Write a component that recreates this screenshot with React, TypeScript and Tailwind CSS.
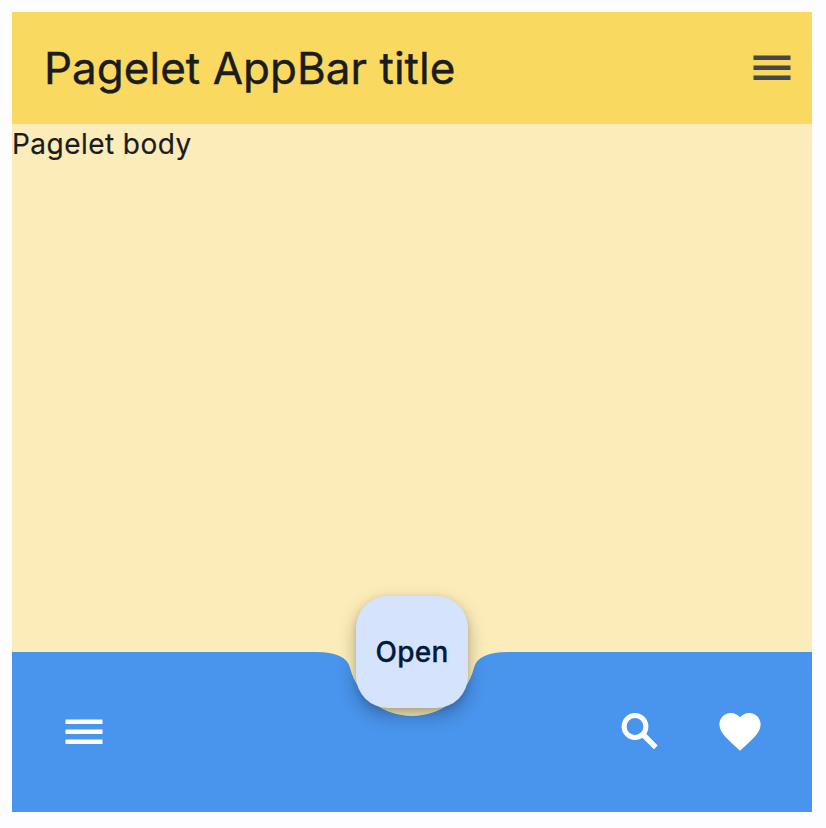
import type { ReactNode } from "react";

function MenuIcon({ className }: { className: string }) {
  return (
    <svg className={`h-12 w-12 ${className}`} viewBox="0 0 48 48" fill="currentColor">
      <path d="M5.5 11.4h37v4.6h-37zM5.5 21.4h37v4.6h-37zM5.5 31.4h37v4.6h-37z" />
    </svg>
  );
}

function SearchIcon() {
  return (
    <svg className="h-12 w-12 text-white" viewBox="0 0 48 48" fill="none" stroke="currentColor" strokeWidth="5">
      <circle cx="19" cy="18.5" r="10.9" />
      <path strokeWidth="5.4" d="M27 26.5L39.8 39.3" />
    </svg>
  );
}

function HeartIcon() {
  return (
    <svg className="h-12 w-12 text-white" viewBox="0 0 48 48" fill="currentColor">
      <path
        transform="translate(-0.7 -1.2) scale(2.06)"
        d="M12 21.35l-1.45-1.32C5.4 15.36 2 12.28 2 8.5 2 5.42 4.42 3 7.5 3c1.74 0 3.41.81 4.5 2.09C13.09 3.81 14.76 3 16.5 3 19.58 3 22 5.42 22 8.5c0 3.78-3.4 6.86-8.55 11.54L12 21.35z"
      />
    </svg>
  );
}

function IconButton({ label, children }: { label: string; children: ReactNode }) {
  return (
    <button aria-label={label} className="flex h-20 w-20 items-center justify-center">
      {children}
    </button>
  );
}

export default function App() {
  return (
    <div className="h-[828px] w-[826px] bg-[#fdfcff] p-3 font-['Inter',sans-serif] text-[#1a1c1e]">
      <div className="relative flex h-[800px] w-[800px] flex-col bg-[#fcecb9]">
        <header className="flex h-28 items-center justify-between bg-[#f9d960] pl-8">
          <h1 className="text-[44px] leading-[56px] tracking-[0.02px] [-webkit-text-stroke:0.4px]">Pagelet AppBar title</h1>
          <IconButton label="Menu">
            <MenuIcon className="text-[#43474e]" />
          </IconButton>
        </header>
        <main className="flex-1 text-[28px] leading-10 tracking-[0.45px] [-webkit-text-stroke:0.2px]">Pagelet body</main>
        <footer className="relative h-40">
          <svg className="absolute inset-0 h-full w-full" viewBox="0 0 800 160" fill="#4994ec">
            <path d="M0 0H304Q334 0 337.94 15.6A64 64 0 0 0 462.06 15.6Q466 0 496 0H800V160H0Z" />
          </svg>
          <div className="relative flex h-full items-center justify-between px-8">
            <IconButton label="Menu">
              <MenuIcon className="text-white" />
            </IconButton>
            <div className="flex gap-5">
              <IconButton label="Search">
                <SearchIcon />
              </IconButton>
              <IconButton label="Favorite">
                <HeartIcon />
              </IconButton>
            </div>
          </div>
        </footer>
        <button className="absolute top-[584px] left-[344px] h-28 w-28 rounded-[32px] bg-[#d6e3fc] text-[28px] font-medium tracking-[0.2px] text-[#001b3d] shadow-[0_7px_18px_rgba(0,0,0,0.28),0_2px_6px_rgba(0,0,0,0.1)] [-webkit-text-stroke:0.3px]">
          Open
        </button>
      </div>
    </div>
  );
}
